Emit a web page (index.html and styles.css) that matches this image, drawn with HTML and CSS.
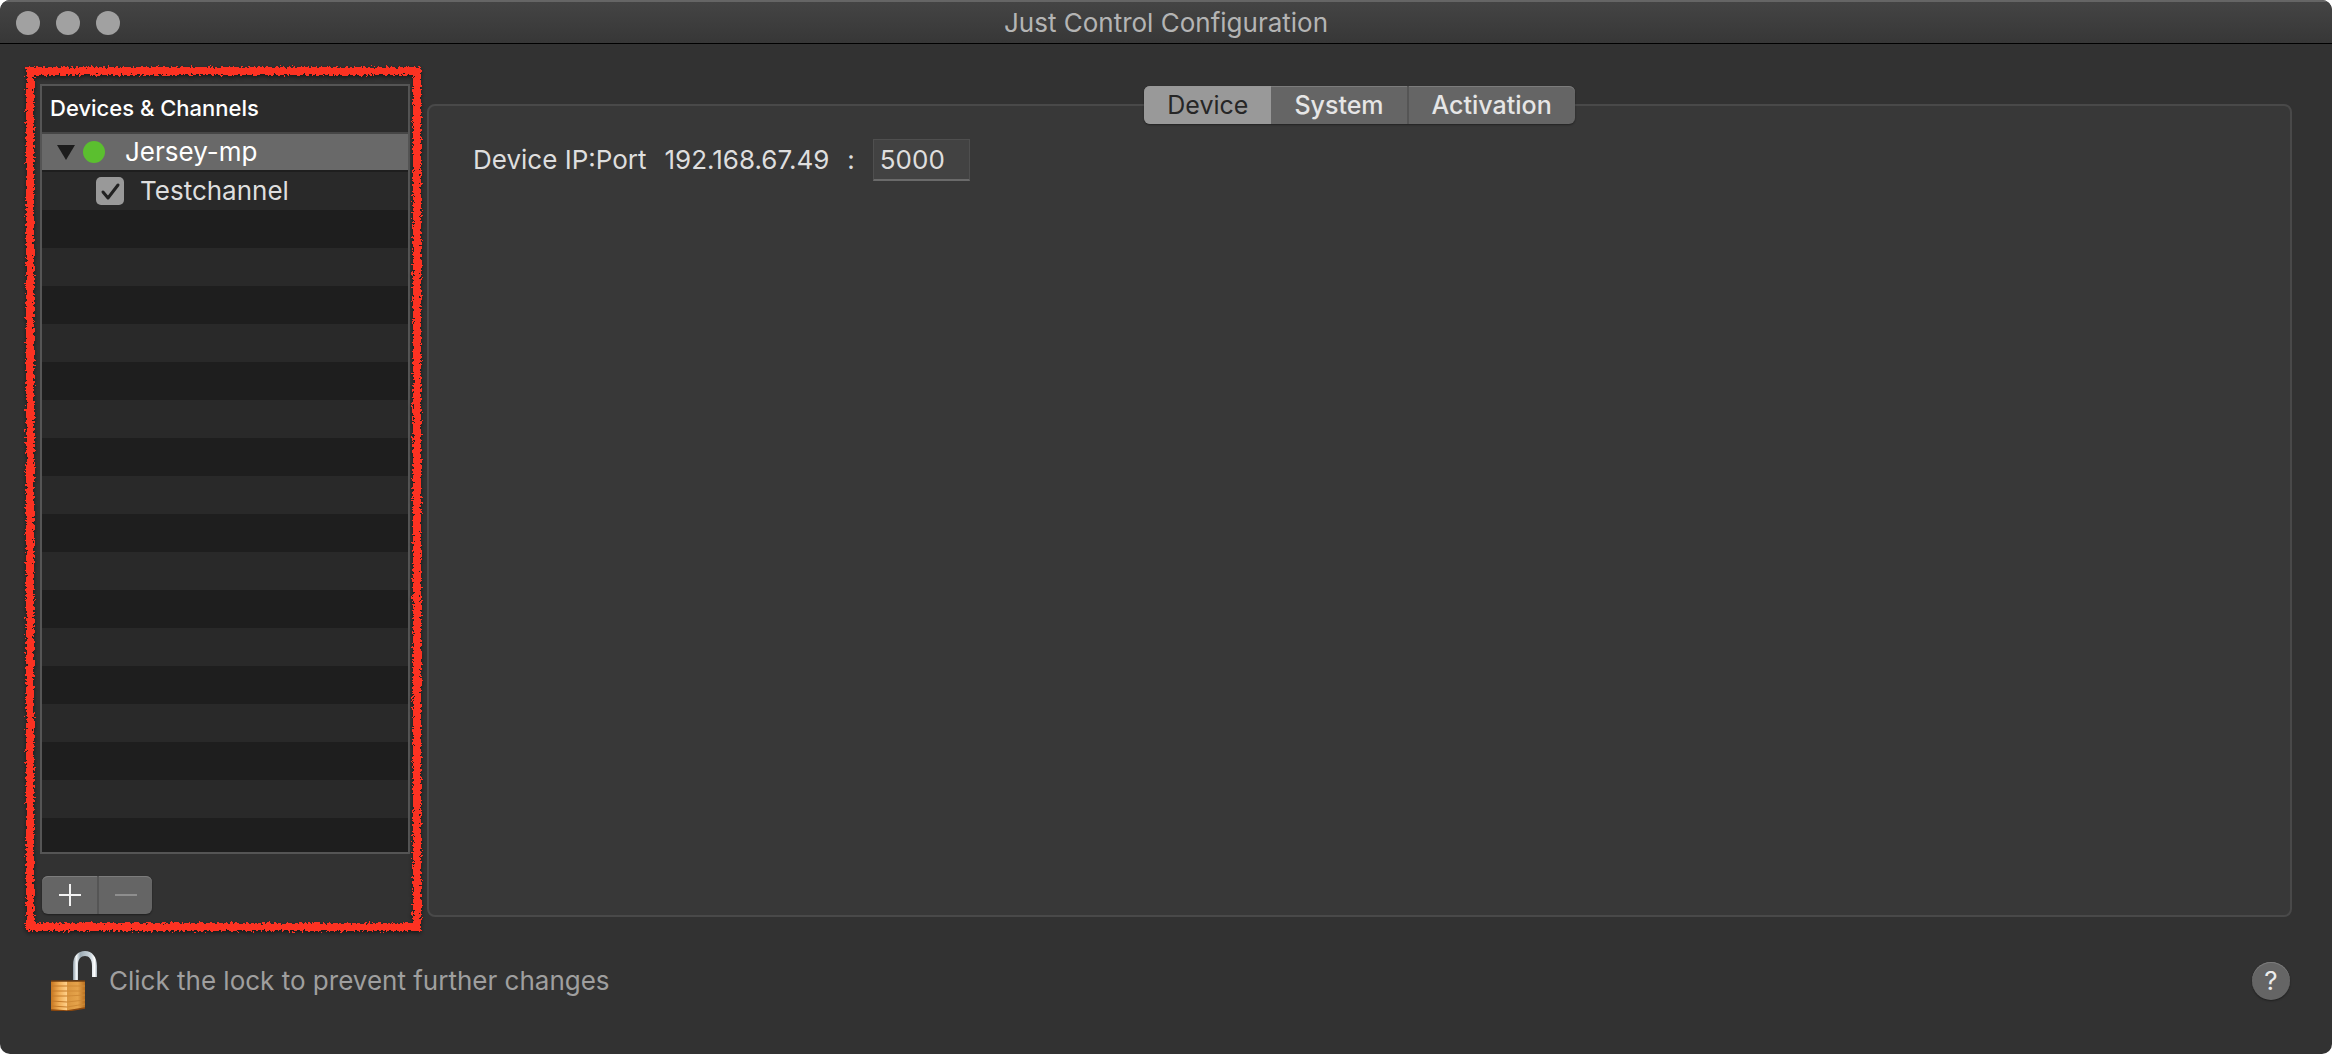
FILE: index.html
```html
<!DOCTYPE html>
<html lang="en">
<head>
    <meta charset="UTF-8">
    <meta name="viewport" content="width=device-width, initial-scale=1.0">
    <title>Just Control Configuration</title>
    <link rel="stylesheet" href="styles.css">
</head>
<body>

<div class="window">
    <header class="titlebar">
        <div class="lights">
            <button class="light" aria-label="Close"></button>
            <button class="light" aria-label="Minimize"></button>
            <button class="light" aria-label="Zoom"></button>
        </div>
        <h1>Just Control Configuration</h1>
    </header>

    <main class="content">
        <aside class="sidebar">
            <div class="device-list">
                <h2>Devices &amp; Channels</h2>
                <ul class="rows">
                    <li class="row selected">
                        <button class="disclosure" aria-label="Collapse">
                            <svg width="18" height="15" viewBox="0 0 18 15"><path d="M0 0h18L9 15z" fill="#1c1c1c"/></svg>
                        </button>
                        <span class="status"></span>
                        <span>Jersey-mp</span>
                    </li>
                    <li class="row channel">
                        <input type="checkbox" id="testchannel" class="check" checked>
                        <label for="testchannel">Testchannel</label>
                    </li>
                </ul>
            </div>
            <div class="segments">
                <button aria-label="Add">
                    <svg width="22" height="22" viewBox="0 0 22 22"><path d="M11 0v22M0 11h22" stroke="#f2f2f2" stroke-width="2"/></svg>
                </button>
                <button aria-label="Remove" disabled>
                    <svg width="22" height="22" viewBox="0 0 22 22"><path d="M0 11h22" stroke="#8e8e8e" stroke-width="2"/></svg>
                </button>
            </div>
            <div class="marker"></div>
        </aside>

        <section class="settings">
            <nav class="tabs">
                <button class="active">Device</button>
                <button>System</button>
                <button>Activation</button>
            </nav>
            <div class="panel">
                <form class="address">
                    <label for="port">Device IP:Port</label>
                    <span>192.168.67.49</span>
                    <span class="colon">:</span>
                    <input type="text" id="port" value="5000">
                </form>
            </div>
        </section>
    </main>

    <footer class="footer">
        <button class="lock">
            <svg width="46" height="60" viewBox="0 0 46 60">
                <defs>
                    <linearGradient id="steel" x1="0" x2="1" y1="0" y2="0">
                        <stop offset="0" stop-color="#8796a0"/>
                        <stop offset=".14" stop-color="#f4f8fa"/>
                        <stop offset=".3" stop-color="#9cabb4"/>
                        <stop offset=".75" stop-color="#cfd9df"/>
                        <stop offset=".9" stop-color="#ffffff"/>
                        <stop offset="1" stop-color="#a5b1b9"/>
                    </linearGradient>
                    <linearGradient id="left" x1="0" x2="1" y1="0" y2="0">
                        <stop offset="0" stop-color="#c67620"/>
                        <stop offset=".5" stop-color="#f0ad55"/>
                        <stop offset="1" stop-color="#ffd08a"/>
                    </linearGradient>
                    <linearGradient id="right" x1="0" x2="1" y1="0" y2="0">
                        <stop offset="0" stop-color="#da963f"/>
                        <stop offset=".6" stop-color="#e5a34b"/>
                        <stop offset="1" stop-color="#b9701f"/>
                    </linearGradient>
                </defs>
                <path d="M22 29V14C22 5 27 0 34 0s12 6 12 15v11h-5V15c0-7-3-10-7-10s-7 3-7 9v15z" fill="url(#steel)"/>
                <path d="M0 30h16v30L0 59z" fill="url(#left)"/>
                <path d="M16 30h18v27l-18 3z" fill="url(#right)"/>
                <path d="M0 35h16M0 40h16M0 45h16M0 50l16 1M0 55l16 1" stroke="#c47a2a" stroke-width="1"/>
                <path d="M16 35h18M16 40h18M16 45l18-1M16 51l18-2M16 56l18-3" stroke="#cf8a36" stroke-width="1"/>
                <path d="M0 30h34" stroke="#6d3c10" stroke-width="1.5"/>
                <path d="M0 59l16 1 18-3" fill="none" stroke="#8a470e" stroke-width="1.5"/>
            </svg>
            <span>Click the lock to prevent further changes</span>
        </button>
        <button class="help">?</button>
    </footer>
</div>

<!-- crayon edge for the marker -->
<svg class="filters" width="0" height="0">
    <filter id="crayon" x="-5%" y="-5%" width="110%" height="110%">
        <feTurbulence type="fractalNoise" baseFrequency="0.4" numOctaves="2" seed="4" result="noise"/>
        <feDisplacementMap in="SourceGraphic" in2="noise" scale="7" xChannelSelector="R" yChannelSelector="G"/>
        <feGaussianBlur stdDeviation="0.4"/>
    </filter>
</svg>

</body>
</html>
```

FILE: styles.css
```css
* {
    box-sizing: border-box;
}
body {
    margin: 0;
    background-color: white;
    color: #dedede;
    font-family: Inter, "Liberation Sans", sans-serif;
    font-size: 26px;
    line-height: 36px;
}
button {
    margin: 0;
    padding: 0;
    border: none;
    background: none;
    color: inherit;
    font: inherit;
}
h1, h2 {
    margin: 0;
    font-weight: 400;
}
.window {
    display: flex;
    flex-direction: column;
    min-height: 100vh;
    border-radius: 10px;
    overflow: hidden;
    background-color: #323232;
}

/* title bar */
.titlebar {
    display: grid;
    grid-template-columns: 1fr auto 1fr;
    align-items: center;
    height: 44px;
    padding: 0 16px;
    border-top: 2px solid #656565;
    border-bottom: 1px solid black;
    background: linear-gradient(#444, #373737);
}
.titlebar h1 {
    font-size: 26px;
    color: #b4b4b4;
}
.lights {
    display: flex;
    gap: 16px;
}
.light {
    width: 24px;
    height: 24px;
    border-radius: 50%;
    background-color: #a1a1a1;
}

.content {
    flex: 1;
    display: grid;
    grid-template-columns: 395px 1fr;
    gap: 6px;
    padding: 23px 40px 0 26px;
}

/* device list */
.sidebar {
    position: relative;
    display: flex;
    flex-direction: column;
    gap: 22px;
    padding: 17px 11px 17px 14px;
}
.marker {
    position: absolute;
    inset: 0;
    border: 8px solid #fc3324;
    filter: url(#crayon) drop-shadow(0 2px 2px rgba(0, 0, 0, 0.5));
    pointer-events: none;
}
.device-list {
    flex: 1;
    display: flex;
    flex-direction: column;
    border: 2px solid #555;
}
.device-list h2 {
    height: 48px;
    padding: 0 8px;
    border-bottom: 2px solid #464646;
    background-color: #2b2b2b;
    color: white;
    font-size: 22px;
    font-weight: 500;
    line-height: 44px;
}
.rows {
    flex: 1;
    margin: 0;
    padding: 0;
    list-style: none;
    background: repeating-linear-gradient(#292929 0 38px, #1e1e1e 38px 76px);
    background-position: 0 38px;
}
.row {
    display: flex;
    align-items: center;
    height: 38px;
}
.row.selected {
    gap: 8px;
    padding-left: 15px;
    border-bottom: 2px solid #1e1e1e;
    background-color: #696969;
    color: white;
}
.row.channel {
    gap: 16px;
    padding-left: 54px;
}
.disclosure {
    display: flex;
}
.status {
    width: 22px;
    height: 22px;
    margin-right: 12px;
    border-radius: 50%;
    background-color: #5bbf2f;
}
.check {
    appearance: none;
    width: 28px;
    height: 28px;
    margin: 0;
    border-radius: 5px;
    background: #999 url("data:image/svg+xml,%3Csvg xmlns='http://www.w3.org/2000/svg' viewBox='0 0 28 28'%3E%3Cpath d='M7 15l5 6L22 8' fill='none' stroke='%23222' stroke-width='3' stroke-linecap='round' stroke-linejoin='round'/%3E%3C/svg%3E");
}

/* segmented buttons */
.segments,
.tabs {
    display: flex;
    height: 38px;
    border-radius: 6px;
    overflow: hidden;
    background-color: #656565;
    box-shadow: inset 0 1px #7c7c7c, 0 1px 2px rgba(0, 0, 0, 0.4);
}
.segments {
    align-self: flex-start;
    margin-left: 2px;
}
.segments button {
    display: flex;
    align-items: center;
    justify-content: center;
    width: 55px;
}
.segments button + button,
.tabs button + button {
    border-left: 2px solid #555;
}

/* settings */
.settings {
    display: flex;
    flex-direction: column;
    padding: 19px 0 14px;
}
.tabs {
    position: relative;
    align-self: center;
    margin-bottom: -20px;
}
.tabs button {
    padding: 0 23px;
    color: #e6e6e6;
    font-size: 25px;
    font-weight: 500;
}
.tabs .active {
    background-color: #999;
    color: #262626;
    font-weight: 400;
}
.tabs .active + button {
    border-left: none;
}
.panel {
    flex: 1;
    padding: 33px 44px;
    border: 2px solid #494949;
    border-radius: 8px;
    background-color: #383838;
}
.address {
    display: flex;
    align-items: center;
    gap: 18px;
}
.address input {
    width: 97px;
    height: 42px;
    padding: 0 6px;
    border: 1px solid #4f4f4f;
    border-bottom: 2px solid #6a6a6a;
    background-color: #424242;
    color: #dedede;
    font: inherit;
}

/* footer */
.footer {
    display: flex;
    align-items: center;
    justify-content: space-between;
    padding: 20px 42px 43px 51px;
}
.lock {
    display: flex;
    align-items: center;
    gap: 12px;
    color: #9f9f9f;
}
.help {
    width: 38px;
    height: 38px;
    border-radius: 50%;
    background-color: #656565;
    box-shadow: inset 0 1px #7c7c7c, 0 1px 2px rgba(0, 0, 0, 0.4);
    color: #ececec;
    font-size: 26px;
}
.filters {
    position: absolute;
}
```
